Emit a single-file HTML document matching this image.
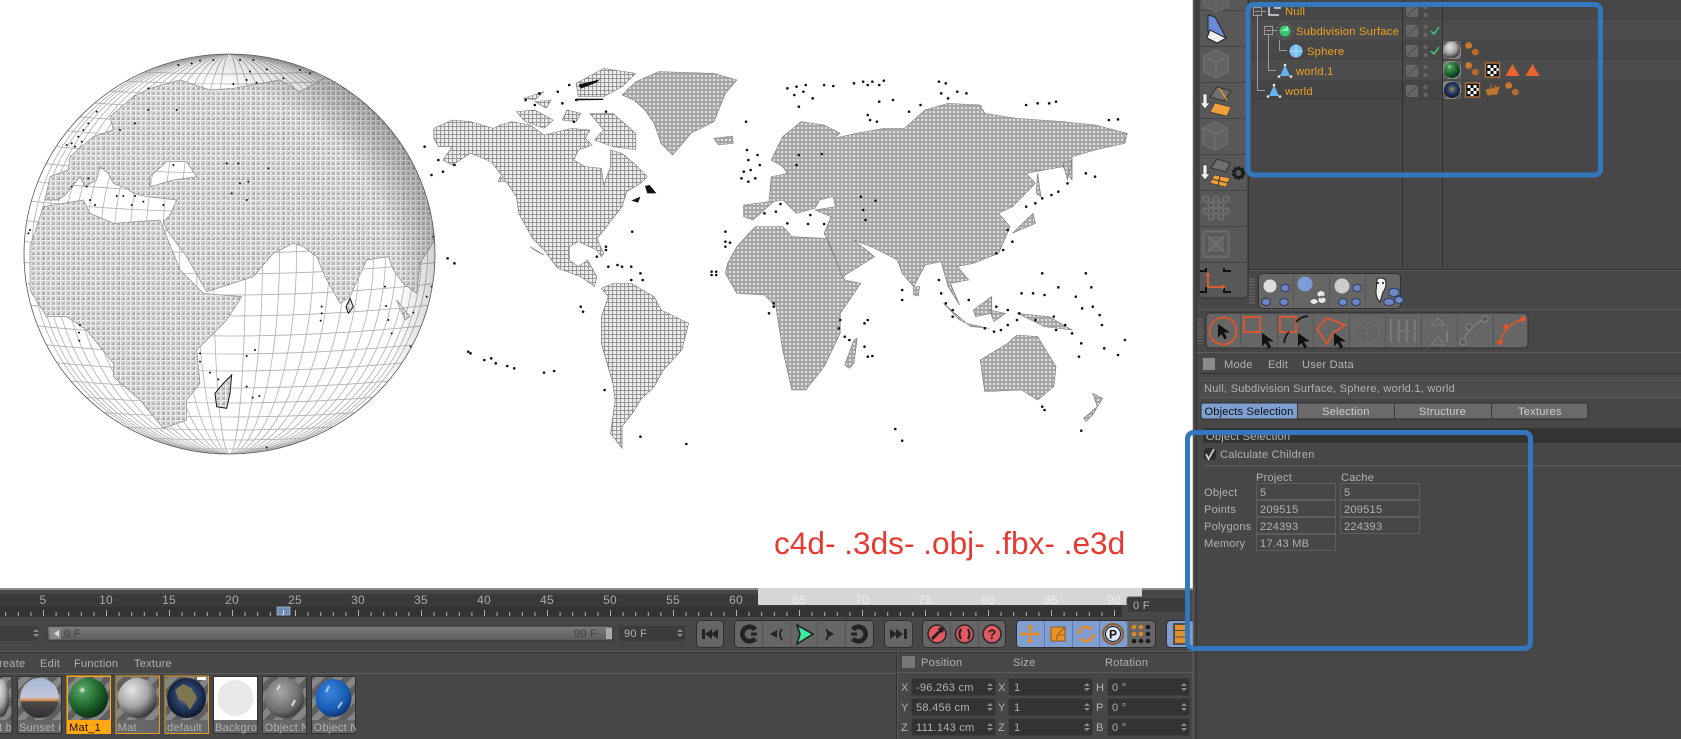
<!DOCTYPE html>
<html><head><meta charset="utf-8"><title>Cinema 4D world map</title>
<style>
html,body{margin:0;padding:0;background:#474747;overflow:hidden}
svg{display:block}
text{font-family:"Liberation Sans",sans-serif;font-size:11.1px;fill:#b2b2b2;letter-spacing:.22px}
.o{fill:#f0a51e;font-size:11.2px}
.g{fill:#666;stroke:#2f2f2f;stroke-width:1}
.d{fill:#242424}
.sep{stroke:#555;stroke-width:1}
.f{fill:#474747;stroke:#5e5e5e}
.c{fill:#333;stroke:#3e3e3e}
.tn{font-size:12px;fill:#a9a9a9;text-anchor:middle}
.ti{font-size:12px;fill:#eee;text-anchor:middle}
</style></head><body>
<svg xmlns="http://www.w3.org/2000/svg" width="1681" height="739" viewBox="0 0 1681 739">
<defs>
<pattern id="ha" patternUnits="userSpaceOnUse" width="4" height="4" patternTransform="scale(2.178,3)"><rect width="4" height="4" fill="#eee"/><path d="M0 .5H4M.5 0V4" stroke="#969696" stroke-width="1"/></pattern>
<pattern id="hb" patternUnits="userSpaceOnUse" width="4" height="4" patternTransform="scale(2.178,3)"><rect width="4" height="4" fill="#a6a6a6"/><rect x="1" y="1" width="2" height="2" fill="#e4e4e4"/></pattern>
<pattern id="hg" patternUnits="userSpaceOnUse" width="15" height="15" patternTransform="scale(3)"><rect width="15" height="15" fill="#a9a9a9"/><path d="M0 .5H15M0 5.5H15M0 10.5H15M.5 0V15M5.5 0V15M10.5 0V15" stroke="#eee" stroke-width="1.6"/><path d="M0 5L5 0M5 5L10 0M10 5L15 0M0 10L5 5M5 10L10 5M10 10L15 5M0 15L5 10M5 15L10 10M10 15L15 10" stroke="#e6e6e6" stroke-width="1"/></pattern>
<pattern id="st" patternUnits="userSpaceOnUse" width="13" height="13" patternTransform="rotate(45)"><rect width="13" height="13" fill="#5f5f5f"/><rect width="6.5" height="13" fill="#868686"/></pattern>
<pattern id="tk" patternUnits="userSpaceOnUse" x="-20" y="608" width="63" height="8"><path d="M.5 2V8M13.1 4V8M25.7 4V8M38.3 4V8M50.9 4V8" stroke="#b4b4b4" stroke-width="1"/></pattern>
<clipPath id="gc"><ellipse cx="229.5" cy="254" rx="205.5" ry="200"/></clipPath>
<radialGradient id="lb" cx=".38" cy=".6" r=".72"><stop offset=".74" stop-color="#000" stop-opacity="0"/><stop offset=".9" stop-color="#000" stop-opacity=".22"/><stop offset="1" stop-color="#000" stop-opacity=".8"/></radialGradient>
<linearGradient id="sl" x1="0" y1="0" x2="0" y2="1"><stop offset="0" stop-color="#7c7c7c"/><stop offset="1" stop-color="#595959"/></linearGradient>
<radialGradient id="mgr" cx=".36" cy=".3" r=".75"><stop offset="0" stop-color="#e4e4e4"/><stop offset=".55" stop-color="#a5a5a5"/><stop offset="1" stop-color="#2c2c2c"/></radialGradient>
<radialGradient id="mgn" cx=".34" cy=".3" r=".75"><stop offset="0" stop-color="#eaf5ea"/><stop offset=".12" stop-color="#4f9c5f"/><stop offset=".55" stop-color="#1f6a30"/><stop offset="1" stop-color="#0b2a12"/></radialGradient>
<radialGradient id="mea" cx=".5" cy=".45" r=".6"><stop offset="0" stop-color="#a08c55"/><stop offset=".45" stop-color="#28406a"/><stop offset="1" stop-color="#0a0f20"/></radialGradient>
<radialGradient id="mbl" cx=".4" cy=".35" r=".7"><stop offset="0" stop-color="#3b86e0"/><stop offset=".7" stop-color="#1559b0"/><stop offset="1" stop-color="#0b2c5e"/></radialGradient>
<radialGradient id="mob" cx=".4" cy=".35" r=".7"><stop offset="0" stop-color="#a8a8a8"/><stop offset=".7" stop-color="#6b6b6b"/><stop offset="1" stop-color="#333"/></radialGradient>
<linearGradient id="msu" x1="0" y1="0" x2="0" y2="1"><stop offset="0" stop-color="#a5b6d6"/><stop offset=".48" stop-color="#c2c6d6"/><stop offset=".56" stop-color="#d98a4a"/><stop offset=".6" stop-color="#4e4a48"/><stop offset="1" stop-color="#2e2e2e"/></linearGradient>
<g id="cube"><path d="M0-14L12-8V8L0 14L-12 8V-8Z" fill="#626262" stroke="#6f6f6f" stroke-width="1.4"/><path d="M-12-8L0-2L12-8M0-2V14" fill="none" stroke="#6f6f6f" stroke-width="1.4"/></g>
<g id="lay"><rect x="-6" y="-6" width="12" height="12" fill="#676767"/><path d="M-6 6L6-6" stroke="#494949"/><circle cx="13.5" cy="-4" r="2.2" fill="#666"/><circle cx="13.5" cy="4" r="2.2" fill="#666"/></g>
<g id="pd"><circle cx="0" cy="0" r="3.4" fill="#c9772a"/><circle cx="6.6" cy="6.6" r="3.4" fill="#b9692a"/></g>
<g id="ck"><rect x="0" y="0" width="14" height="14" fill="#111" stroke="#b5713a" stroke-width="1.4"/><path d="M2 2h3v3H2zM8 2h3v3H8zM5 5h3v3H5zM11 5h2v3h-2zM2 8h3v3H2zM8 8h3v3H8zM5 11h3v2H5z" fill="#fff"/></g>
<g id="tri"><path d="M0-7L5 4H-5Z" fill="#63b3ee"/><circle cx="0" cy="-7" r="1.3" fill="#eee"/><circle cx="-6" cy="4.500" r="1.3" fill="#eee"/><circle cx="6" cy="4.500" r="1.3" fill="#eee"/></g>
<g id="arw"><path d="M0 0L0 13.500L3.500 10L6.500 15.500L9 14L6 8.500L12 8.500Z" fill="#111"/></g>
<g id="sp"><path d="M-3-1L0-4L3-1ZM-3 1L0 4L3 1Z" fill="#8e8e8e"/></g>
</defs>

<rect width="1681" height="739" fill="#474747"/>
<rect width="1193" height="588" fill="#fff"/>

<!-- GLOBE -->
<g clip-path="url(#gc)">
<rect x="20" y="50" width="420" height="410" fill="#fff"/>
<g fill="none" stroke="#b0b0b0" stroke-width=".8">
<ellipse cx="229.5" cy="254" rx="16" ry="200"/><ellipse cx="229.5" cy="254" rx="33" ry="200"/><ellipse cx="229.5" cy="254" rx="50" ry="200"/><ellipse cx="229.5" cy="254" rx="67" ry="200"/><ellipse cx="229.5" cy="254" rx="84" ry="200"/><ellipse cx="229.5" cy="254" rx="100" ry="200"/><ellipse cx="229.5" cy="254" rx="116" ry="200"/><ellipse cx="229.5" cy="254" rx="130" ry="200"/><ellipse cx="229.5" cy="254" rx="144" ry="200"/><ellipse cx="229.5" cy="254" rx="156" ry="200"/><ellipse cx="229.5" cy="254" rx="167" ry="200"/><ellipse cx="229.5" cy="254" rx="177" ry="200"/><ellipse cx="229.5" cy="254" rx="185" ry="200"/><ellipse cx="229.5" cy="254" rx="192" ry="200"/><ellipse cx="229.5" cy="254" rx="198" ry="200"/>
<path d="M20 241Q229 265 440 241M20 262Q229 286 440 262M20 283Q229 307 440 283M20 304Q229 328 440 304M20 324Q229 348 440 324M20 342Q229 366 440 342M20 359Q229 383 440 359M20 376Q229 400 440 376M20 391Q229 415 440 391M20 405Q229 429 440 405M20 418Q229 442 440 418M20 428Q229 452 440 428M20 437Q229 461 440 437M20 444Q229 468 440 444M20 220Q229 244 440 220M20 200Q229 224 440 200M20 180Q229 204 440 180M20 161Q229 185 440 161M20 143Q229 167 440 143M20 126Q229 150 440 126M20 111Q229 135 440 111M20 96Q229 120 440 96M20 83Q229 107 440 83M20 72Q229 96 440 72M20 62Q229 86 440 62"/>
</g>
<g transform="translate(0,30) scale(.33333)">
<path fill="url(#hg)" stroke="#8a8a8a" stroke-width="2" fill-rule="evenodd" d="M135 510L150 440L205 420L210 380L280 320L340 300L330 260L400 200L450 175L540 150L630 180L700 175L840 150L900 185L1000 130L1100 170L1200 280L1290 470L1310 620L1260 700L1250 790L1210 760L1180 720L1165 680L1100 690L1050 800L1020 820L975 740L950 680L910 650L880 640L820 670L760 740L620 785L560 680L530 640L500 600L490 575L510 555L530 510L440 500L400 490L380 475L340 460L325 430L300 410L290 450L255 470L240 440L200 490L175 510ZM450 440L500 395L560 395L590 440L520 450L450 470Z"/>
<path fill="url(#hg)" stroke="#8a8a8a" stroke-width="2" d="M90 650L130 530L250 510L270 550L340 580L480 570L540 720L610 790L725 800L680 870L590 960L600 1060L560 1110L560 1170L490 1195L420 1110L340 1040L340 1000L260 900L200 860L140 860L90 780Z"/>
<path fill="url(#hg)" stroke="#111" stroke-width="3" d="M645 1090L670 1060L695 1035L690 1090L680 1135L650 1130Z"/>
<path fill="url(#hg)" stroke="#111" stroke-width="3" d="M1038 830L1050 805L1060 830L1045 850Z"/>
<path fill="url(#hg)" stroke="#888" stroke-width="2" d="M1190 810L1230 860L1215 870Z"/>
<path fill="none" stroke="#111" stroke-width="6" stroke-linecap="round" d="M215 340h.1M235 320h.1M250 300h.1M265 280h.1M225 350h.1M245 335h.1M200 345h.1M290 245h.1M445 175h.1M535 105h.1M575 100h.1M600 92h.1M640 90h.1M720 90h.1M760 90h.1M750 125h.1M770 158h.1M700 162h.1M740 150h.1M800 118h.1M850 145h.1M900 120h.1M930 130h.1M445 240h.1M405 280h.1M530 240h.1M360 300h.1M350 498h.1M265 445h.1M260 470h.1M215 470h.1M270 510h.1M285 525h.1M395 525h.1M405 498h.1M430 515h.1M490 525h.1M370 498h.1M520 405h.1M680 400h.1M715 400h.1M720 460h.1M745 455h.1M740 510h.1M695 490h.1M805 415h.1M1155 770h.1M1158 828h.1M1165 870h.1M1175 910h.1M965 830h.1M965 850h.1M962 872h.1M1240 848h.1M1232 950h.1M1280 800h.1M1295 770h.1M1300 620h.1M240 885h.1M237 908h.1M238 932h.1M600 970h.1M600 995h.1M630 1028h.1M655 1048h.1M740 978h.1M765 960h.1M740 1070h.1M758 1103h.1M778 1098h.1M800 1252h.1M85 610h.1M90 600h.1M72 730h.1M72 745h.1"/>
</g>
<ellipse cx="229.5" cy="254" rx="205.5" ry="200" fill="url(#lb)"/>
</g>
<ellipse cx="229.5" cy="254" rx="205.5" ry="200" fill="none" stroke="#555" stroke-width=".8"/>

<!-- WORLD MAP -->
<g transform="translate(420,50) scale(.4592,.33333)">
<g stroke="#777" stroke-width="1.5">
<path fill="url(#ha)" d="M30 235L70 210L110 215L160 235L175 225L200 215L240 225L270 255L330 235L370 240L360 265L375 285L345 300L335 330L360 350L395 355L400 405L415 350L415 300L440 310L470 345L495 380L480 400L450 425L440 470L420 505L395 550L385 565L400 610L395 620L385 600L345 575L325 590L325 630L345 650L365 630L385 680L380 710L350 680L300 655L270 600L245 565L215 490L210 440L180 380L155 335L110 310L70 345L50 330L70 290L40 290L30 265Z"/>
<path fill="url(#ha)" d="M340 100L400 55L470 70L440 110L400 140L345 140Z"/>
<path fill="url(#ha)" d="M210 185L250 180L290 210L270 235L230 215ZM370 190L420 190L470 250L470 300L420 290L380 270L400 240ZM320 180L350 190L340 215L310 210ZM250 155L285 150L275 175ZM225 145L270 125L250 150Z"/>
<path fill="url(#hb)" d="M440 135L470 95L520 65L640 70L690 90L665 130L640 215L590 250L550 315L525 280L510 220L490 180L465 150Z"/>
<path fill="url(#ha)" d="M395 715L420 700L460 700L510 740L525 780L585 820L570 900L530 960L510 1010L480 1050L465 1085L440 1130L440 1195L415 1150L425 1050L420 1000L395 880L395 800L410 740Z"/>
<path fill="url(#hb)" d="M670 640L690 590L730 530L790 530L810 560L885 565L925 690L960 700L915 790L915 850L880 950L840 1020L810 1020L790 900L775 770L750 735L690 730L665 670Z"/>
<path fill="url(#hb)" d="M705 465L760 455L765 380L800 370L790 350L765 330L790 260L830 215L880 225L915 250L900 265L950 250L1010 235L1055 235L1100 180L1150 160L1220 165L1230 190L1300 205L1400 215L1470 225L1540 250L1535 280L1470 300L1420 320L1420 390L1400 350L1320 370L1340 400L1290 470L1260 490L1285 530L1260 610L1205 640L1170 650L1195 690L1155 700L1175 765L1150 710L1135 635L1100 645L1075 710L1050 670L1040 630L990 595L945 570L990 620L920 680L890 575L880 550L895 500L860 480L905 470L900 440L870 450L860 475L820 490L790 450L770 455L725 510L705 500Z"/>
<path fill="url(#hb)" d="M1220 930L1280 880L1300 855L1345 860L1385 950L1380 1010L1345 1050L1310 1020L1230 1025Z"/>
<path fill="url(#hb)" d="M925 945L945 870L952 865L945 940L935 955ZM1205 780L1245 740L1245 790L1210 800ZM1300 790L1370 800L1420 840L1360 830ZM1140 760L1190 820L1175 810ZM1290 550L1335 490L1340 520ZM640 265L680 258L682 280L650 285ZM1400 340L1420 330L1410 390ZM1345 370L1352 440L1342 430ZM1075 710L1088 710L1085 738L1075 735ZM1240 780L1275 790L1250 815ZM1190 820L1240 835L1200 830ZM1445 1105L1475 1070L1465 1095L1450 1115ZM1465 1030L1487 1045L1475 1070Z"/>
<path fill="url(#ha)" d="M240 590L270 615L255 605ZM175 380L185 395L170 395Z"/>
</g>
<path fill="#111" d="M490 408L500 405L515 430L495 430ZM345 104L392 88L384 98L350 116ZM340 146L400 146L398 150L342 151ZM460 452L480 440L475 458Z"/>
<path fill="none" stroke="#111" stroke-width="2.6" stroke-linecap="round" vector-effect="non-scaling-stroke" d="M325 105h.1M300 125h.1M230 150h.1M260 130h.1M250 165h.1M310 160h.1M340 150h.1M405 185h.1M335 215h.1M10 290h.1M40 330h.1M25 375h.1M50 365h.1M75 345h.1M60 625h.1M75 640h.1M410 650h.1M385 620h.1M405 600h.1M405 590h.1M430 645h.1M440 650h.1M460 650h.1M480 670h.1M485 690h.1M460 690h.1M350 770h.1M355 785h.1M105 905h.1M110 910h.1M140 930h.1M155 925h.1M165 940h.1M190 948h.1M205 955h.1M270 968h.1M292 963h.1M402 1020h.1M480 1160h.1M580 1182h.1M665 545h.1M665 575h.1M675 578h.1M665 590h.1M635 665h.1M645 665h.1M635 675h.1M645 675h.1M770 770h.1M770 760h.1M760 790h.1M915 810h.1M912 835h.1M925 860h.1M935 870h.1M975 810h.1M968 820h.1M968 890h.1M975 920h.1M985 918h.1M710 215h.1M712 300h.1M715 330h.1M735 315h.1M705 365h.1M720 360h.1M740 345h.1M730 385h.1M700 385h.1M715 395h.1M800 115h.1M820 110h.1M840 105h.1M815 135h.1M835 125h.1M855 145h.1M880 105h.1M900 108h.1M825 170h.1M945 100h.1M965 95h.1M985 95h.1M1010 92h.1M975 105h.1M1000 105h.1M1130 95h.1M1145 100h.1M1170 125h.1M1190 130h.1M1135 130h.1M1150 145h.1M1320 165h.1M1345 160h.1M1370 160h.1M1385 155h.1M1500 210h.1M1520 208h.1M1000 155h.1M1030 150h.1M975 195h.1M980 210h.1M995 215h.1M1065 185h.1M1090 165h.1M1450 370h.1M1470 380h.1M1340 460h.1M1320 470h.1M1355 445h.1M1375 435h.1M1390 425h.1M1410 400h.1M1255 610h.1M1270 600h.1M1290 575h.1M1280 540h.1M1145 760h.1M1160 780h.1M1160 800h.1M1230 835h.1M1250 845h.1M1265 840h.1M1280 825h.1M1305 790h.1M1300 810h.1M1255 770h.1M1280 780h.1M1340 810h.1M1380 800h.1M1385 840h.1M1420 850h.1M1310 730h.1M1335 730h.1M1360 735h.1M1390 712h.1M1355 670h.1M1450 670h.1M1462 712h.1M1428 740h.1M1442 775h.1M1465 770h.1M1480 795h.1M1485 825h.1M1440 880h.1M1490 895h.1M1520 915h.1M1535 870h.1M1435 920h.1M1405 825h.1M1050 720h.1M1050 750h.1M1130 690h.1M1135 730h.1M1195 750h.1M1355 1070h.1M1360 1080h.1M1035 1137h.1M1050 1172h.1M1440 1142h.1M462 545h.1M960 440h.1M965 480h.1M970 510h.1M992 452h.1M875 312h.1M825 315h.1M820 345h.1M850 495h.1M845 522h.1M800 520h.1M880 522h.1M775 485h.1M750 490h.1M785 462h.1"/>
</g>

<text x="774" y="554" style="font-size:31.6px;fill:#e53a31;letter-spacing:0">c4d- .3ds- .obj- .fbx- .e3d</text>

<!-- TIMELINE -->
<rect x="0" y="588" width="1193" height="2" fill="#8c8c8c"/>
<rect x="0" y="594" width="1122" height="13" fill="#3a3a3a"/>
<rect x="0" y="607" width="1122" height="10" rx="1" fill="#333"/>
<rect x="0" y="608" width="1115" height="8" fill="url(#tk)"/>
<rect x="277" y="607" width="13" height="8" fill="#6f8db5" stroke="#9db7d8" stroke-width=".8"/>
<path d="M283.5 610V615" stroke="#ddd"/>
<rect x="758" y="588" width="384" height="17" rx="1" fill="#d6d6d6"/>
<g>
<text class="tn" x="43" y="604">5</text><text class="tn" x="106" y="604">10</text><text class="tn" x="169" y="604">15</text><text class="tn" x="232" y="604">20</text><text class="tn" x="295" y="604">25</text><text class="tn" x="358" y="604">30</text><text class="tn" x="421" y="604">35</text><text class="tn" x="484" y="604">40</text><text class="tn" x="547" y="604">45</text><text class="tn" x="610" y="604">50</text><text class="tn" x="673" y="604">55</text><text class="tn" x="736" y="604">60</text>
<text class="ti" x="799" y="604">65</text><text class="ti" x="862" y="604">70</text><text class="ti" x="925" y="604">75</text><text class="ti" x="988" y="604">80</text><text class="ti" x="1051" y="604">85</text><text class="ti" x="1114" y="604">90</text>
</g>
<rect x="1127" y="597" width="64" height="16" rx="2" fill="#3b3b3b" stroke="#535353"/>
<text x="1133" y="609">0 F</text>

<!-- slider row -->
<rect x="-2" y="626" width="40" height="15" rx="2" fill="#3d3d3d"/>
<use href="#sp" x="36" y="633"/>
<rect x="47" y="626" width="566" height="15" rx="3" fill="url(#sl)" stroke="#303030"/>
<rect x="50" y="628" width="11" height="11" fill="#888"/><path d="M59 630L54 633.5L59 637Z" fill="#ddd"/>
<text x="64" y="637" style="fill:#3f3f3f">0 F</text>
<text x="574" y="637" style="fill:#3f3f3f">90 F</text>
<rect x="606" y="628" width="6" height="11" fill="#aaa"/>
<rect x="619" y="626" width="66" height="15" rx="2" fill="#3b3b3b"/>
<text x="624" y="637">90 F</text>
<use href="#sp" x="680" y="633"/>

<!-- transport -->
<rect class="g" x="696.5" y="620.5" width="27" height="27" rx="4"/>
<path class="d" d="M702 629h3v10h-3zM705 634l7-5v10zM711 634l7-5v10z"/>
<rect class="g" x="734.5" y="620.5" width="139" height="27" rx="4"/>
<path class="sep" d="M762.5 621V647M790.5 621V647M817.5 621V647M845.5 621V647"/>
<path d="M755.2 629.5A7.2 7.2 0 1 0 755.2 638.5" fill="none" stroke="#222" stroke-width="4.6"/><path class="d" d="M751 632.500h6v3h-6z"/>
<path class="d" d="M770 634l7-4v8z"/><path d="M782 629Q778 634 782 640" fill="none" stroke="#222" stroke-width="1.8"/>
<path d="M797 625L813 634L797 644L800 634Z" fill="#3fe898" stroke="#222" stroke-width="1.6"/>
<path class="d" d="M841 630l-7 4 7 4z" transform="matrix(-1 0 0 1 1668 0)"/><path d="M826 629Q830 634 826 640" fill="none" stroke="#222" stroke-width="1.8"/>
<path d="M852.8 629.5A7.2 7.2 0 1 1 852.8 638.5" fill="none" stroke="#222" stroke-width="4.6"/><path class="d" d="M851 632.500h6v3h-6z"/>
<rect class="g" x="884.5" y="620.5" width="28" height="27" rx="4"/>
<path class="d" d="M890 629l7 5-7 5zM896 629l7 5-7 5zM904 629h3v10h-3z"/>
<rect class="g" x="922.5" y="620.5" width="83" height="27" rx="4"/>
<path class="sep" d="M950.5 621V647M978.5 621V647"/>
<circle cx="937" cy="634" r="9" fill="#e25a60" stroke="#2a2a2a" stroke-width="1.6"/><path d="M932 639L939 632" stroke="#222" stroke-width="3"/><circle cx="941" cy="630" r="2.8" fill="#222"/>
<circle cx="964.5" cy="634" r="9" fill="#e25a60" stroke="#2a2a2a" stroke-width="1.6"/><path d="M961 629Q958 634 961 639M968 629Q971 634 968 639" fill="none" stroke="#222" stroke-width="2.2"/>
<circle cx="992" cy="634" r="9" fill="#e25a60" stroke="#2a2a2a" stroke-width="1.6"/><text x="992" y="639" text-anchor="middle" style="font-size:14px;font-weight:bold;fill:#222;letter-spacing:0">?</text>
<rect class="g" x="1016.5" y="620.5" width="139" height="27" rx="4"/>
<rect x="1017" y="621" width="110" height="26" rx="3" fill="#809fd0"/>
<path d="M1044.5 621V647M1072.5 621V647M1099.5 621V647M1127.5 621V647" stroke="#5e7aa5"/>
<path d="M1030 626V642M1022 634H1038" stroke="#e88a25" stroke-width="2.2"/><path d="M1030 624l3 4h-6zM1030 644l3-4h-6zM1020 634l4-3v6zM1040 634l-4-3v6z" fill="#e88a25"/>
<rect x="1051" y="627" width="14" height="14" fill="#ea9226" stroke="#8a5b20"/><path d="M1057 635V641M1057 635H1065M1058 634L1065 627" stroke="#8a5b20"/>
<circle cx="1086" cy="634" r="7" fill="none" stroke="#e88a25" stroke-width="2.6" stroke-dasharray="17 5"/>
<circle cx="1113" cy="634" r="10" fill="none" stroke="#8e5a22" stroke-width="2"/><circle cx="1113" cy="634" r="7.5" fill="#dfe6f2" stroke="#111"/><text x="1113" y="638.5" text-anchor="middle" style="font-size:12px;font-weight:bold;fill:#111;letter-spacing:0">P</text>
<g fill="#d98a2c"><circle cx="1134" cy="627" r="2.3"/><circle cx="1141" cy="627" r="2.3"/><circle cx="1134" cy="634" r="2.3"/><circle cx="1141" cy="634" r="2.3"/></g>
<g fill="#1b1b1b"><circle cx="1148" cy="627" r="2.3"/><circle cx="1148" cy="634" r="2.3"/><circle cx="1134" cy="641" r="2.3"/><circle cx="1141" cy="641" r="2.3"/><circle cx="1148" cy="641" r="2.3"/></g>
<rect x="1166.5" y="620.5" width="28" height="27" rx="4" fill="#809fd0" stroke="#2f2f2f"/>
<rect x="1174" y="624" width="14" height="20" fill="#e0912e" stroke="#4d4d4d" stroke-width="2"/><path d="M1174 630.5H1188M1174 637H1188" stroke="#4d4d4d"/>

<!-- material area -->
<path d="M0 651.5H1193M0 673.5H897" stroke="#5c5c5c"/>
<path d="M0 652.5H1193" stroke="#333"/>
<text x="-1" y="667">reate</text><text x="40" y="667">Edit</text><text x="74" y="667">Function</text><text x="134" y="667">Texture</text>
<g stroke="#2f2f2f"><rect x="-3" y="676.5" width="15" height="57" fill="#676767"/><rect x="17.5" y="676.5" width="44" height="57" fill="#676767"/><rect x="67" y="676" width="43.5" height="57.5" fill="#ffa812" stroke="#ffa812"/><rect x="116" y="676" width="43.5" height="57.5" fill="#676767" stroke="#e29d23"/><rect x="165" y="676" width="43.5" height="57.5" fill="#676767" stroke="#e29d23"/><rect x="213.5" y="676.5" width="44" height="57" fill="#676767"/><rect x="262.5" y="676.5" width="44" height="57" fill="#676767"/><rect x="311.5" y="676.5" width="44" height="57" fill="#676767"/></g>
<rect x="-3" y="677" width="15" height="43" fill="url(#st)"/><rect x="18" y="677" width="43" height="43" fill="url(#st)"/><rect x="68" y="677" width="42" height="43" fill="url(#st)"/><rect x="117" y="677" width="42" height="43" fill="url(#st)"/><rect x="166" y="677" width="42" height="43" fill="url(#st)"/><rect x="214" y="677" width="43" height="43" fill="#fff"/><rect x="263" y="677" width="43" height="43" fill="url(#st)"/><rect x="312" y="677" width="43" height="43" fill="url(#st)"/>
<ellipse cx="1" cy="698" rx="8" ry="19" fill="url(#mgr)"/>
<ellipse cx="39.5" cy="698" rx="19.5" ry="20" fill="url(#msu)"/>
<ellipse cx="88.5" cy="698" rx="19.5" ry="20" fill="url(#mgn)"/>
<ellipse cx="137.5" cy="698" rx="19.5" ry="20" fill="url(#mgr)"/>
<ellipse cx="186.5" cy="698" rx="19.5" ry="20" fill="url(#mea)"/><path d="M175 690l8-6 8 4 6 10-7 12-5-8-6-2z" fill="#7d7650"/><rect x="197" y="677" width="9" height="3" fill="#fff"/>
<ellipse cx="235.5" cy="698" rx="18" ry="18" fill="#e9e9e9"/>
<ellipse cx="284.5" cy="698" rx="19.5" ry="20" fill="url(#mob)"/><path d="M277 690l3-5M292 706l3-6" stroke="#ddd" stroke-width="2"/>
<ellipse cx="333.5" cy="698" rx="18" ry="19" fill="url(#mbl)"/><path d="M326 692l3-6M338 708l4-6" stroke="#a9c9ee" stroke-width="2"/>
<text x="-1" y="731">t b</text><text x="19" y="731">Sunset I</text><text x="69" y="731" style="fill:#201000">Mat_1</text><text x="117.5" y="731">Mat</text><text x="167" y="731">default</text><text x="215" y="731">Backgro</text><text x="264.5" y="731">Object N</text><text x="313.5" y="731">Object N</text>
<rect x="356" y="676" width="6" height="58" fill="#474747"/><rect x="12.5" y="676" width="4" height="58" fill="#474747"/>
<rect x="306.7" y="676" width="4" height="58" fill="#474747"/><rect x="257.8" y="676" width="4.4" height="58" fill="#474747"/>
<path d="M12 676.5V733.5M61.5 676.5V733.5M306.5 676.5V733.5M257.5 676.5V733.5" stroke="#2f2f2f"/>

<!-- coordinates -->
<path d="M896.5 652V739" stroke="#2f2f2f"/><path d="M897.5 652V739" stroke="#5a5a5a"/>
<rect x="902" y="656" width="13" height="12" fill="#777"/>
<text x="921" y="666">Position</text><text x="1013" y="666">Size</text><text x="1105" y="666">Rotation</text>
<path d="M898 672.5H1193" stroke="#5c5c5c"/>
<rect class="c" x="911.5" y="678.5" width="84" height="17" rx="2"/><rect class="c" x="1008.5" y="678.5" width="84" height="17" rx="2"/><rect class="c" x="1107.5" y="678.5" width="82" height="17" rx="2"/><rect class="c" x="911.5" y="698.5" width="84" height="17" rx="2"/><rect class="c" x="1008.5" y="698.5" width="84" height="17" rx="2"/><rect class="c" x="1107.5" y="698.5" width="82" height="17" rx="2"/><rect class="c" x="911.5" y="718.5" width="84" height="17" rx="2"/><rect class="c" x="1008.5" y="718.5" width="84" height="17" rx="2"/><rect class="c" x="1107.5" y="718.5" width="82" height="17" rx="2"/>
<text x="901" y="691">X</text><text x="998" y="691">X</text><text x="1096" y="691">H</text><text x="901" y="711">Y</text><text x="998" y="711">Y</text><text x="1096" y="711">P</text><text x="901" y="731">Z</text><text x="998" y="731">Z</text><text x="1096" y="731">B</text>
<text x="916" y="691">-96.263 cm</text><text x="1014" y="691">1</text><text x="1112" y="691">0 °</text>
<text x="916" y="711">58.456 cm</text><text x="1014" y="711">1</text><text x="1112" y="711">0 °</text>
<text x="916" y="731">111.143 cm</text><text x="1014" y="731">1</text><text x="1112" y="731">0 °</text>
<use href="#sp" x="990" y="687"/><use href="#sp" x="1087" y="687"/><use href="#sp" x="1184" y="687"/><use href="#sp" x="990" y="707"/><use href="#sp" x="1087" y="707"/><use href="#sp" x="1184" y="707"/><use href="#sp" x="990" y="727"/><use href="#sp" x="1087" y="727"/><use href="#sp" x="1184" y="727"/>

<!-- RIGHT PANEL -->
<rect x="1193" y="0" width="488" height="739" fill="#474747"/>
<path d="M1196.5 0V739" stroke="#333"/><path d="M1193 0V739" stroke="#777" stroke-width=".6"/>
<!-- left toolbar -->
<rect x="1199" y="-10" width="49" height="308" rx="4" fill="#585858" stroke="#2f2f2f"/>
<path d="M1199 10.5H1247M1199 46.5H1247M1199 82.5H1247M1199 118.5H1247M1199 154.5H1247M1199 190.5H1247M1199 226.5H1247M1199 262.5H1247" stroke="#454545"/>
<path d="M1248.5 0V270" stroke="#333"/>
<use href="#cube" x="1216" y="-2" opacity=".8"/>
<path d="M1208 15L1215 17L1222 30L1226 38L1208 32Z" fill="#6a8ad8" stroke="#222"/><path d="M1210 30L1226 38L1217 43L1207 38Z" fill="#eee" stroke="#222"/>
<use href="#cube" x="1216" y="64"/>
<path d="M1203 94h4v9h3l-5 6-5-6h3z" fill="#eee" stroke="#333" stroke-width=".6"/><path d="M1217 87L1231 91L1224 101L1210 97Z" fill="#6f6f6f" stroke="#333"/><path d="M1219 88L1227 100" stroke="#e8902a" stroke-width="1.4"/><path d="M1215 103L1231 107L1227 116L1210 112Z" fill="#f0a03a" stroke="#333" stroke-width=".6"/>
<use href="#cube" x="1215" y="136"/>
<path d="M1203 165h4v9h3l-5 6-5-6h3z" fill="#eee" stroke="#333" stroke-width=".6"/><path d="M1217 159L1230 163L1226 172L1211 168Z" fill="#6f6f6f" stroke="#333"/><path d="M1214 175L1230 178L1226 187L1210 183Z" fill="#f0a03a" stroke="#333" stroke-width=".6"/><path d="M1212 179L1228 183M1220 176L1218 186" stroke="#333"/>
<circle cx="1238.5" cy="173" r="4.5" fill="none" stroke="#1c1c1c" stroke-width="3"/><circle cx="1238.5" cy="173" r="6" fill="none" stroke="#1c1c1c" stroke-width="1.6" stroke-dasharray="2 2"/>
<g fill="none" stroke="#707070" stroke-width="1.8"><circle cx="1206" cy="199" r="2.8"/><circle cx="1216" cy="199" r="2.8"/><circle cx="1226" cy="199" r="2.8"/><circle cx="1211" cy="205" r="2.8"/><circle cx="1221" cy="205" r="2.8"/><circle cx="1206" cy="211" r="2.8"/><circle cx="1216" cy="211" r="2.8"/><circle cx="1226" cy="211" r="2.8"/><circle cx="1211" cy="217" r="2.8"/><circle cx="1221" cy="217" r="2.8"/></g>
<rect x="1203" y="231" width="26" height="26" rx="2" fill="#5f5f5f" stroke="#6f6f6f" stroke-width="1.5"/><rect x="1207" y="235" width="18" height="18" fill="#636363" stroke="#4a4a4a"/><path d="M1207 235L1225 253M1225 235L1207 253" stroke="#747474" stroke-width="1.5"/>
<path d="M1200 271H1206V268M1224 268V271H1231M1200 292H1206V287M1224 287V292H1231" fill="none" stroke="#111" stroke-width="2"/>
<path d="M1208 274V287H1224" fill="none" stroke="#e85c2e" stroke-width="1.8"/><path d="M1208 272l2.5 4h-5zM1226 287l-4-2.5v5z" fill="#e85c2e"/>

<!-- object manager rows -->
<rect x="1249" y="20" width="432" height="20" fill="#4c4c4c"/>
<rect x="1249" y="60" width="432" height="20" fill="#4c4c4c"/>
<rect x="1249" y="80" width="193" height="20" fill="#444"/>
<path d="M1402.5 0V268M1442.5 0V268" stroke="#2e2e2e"/>
<path d="M1249 270.5H1681" stroke="#5a5a5a"/><path d="M1249 269.5H1681" stroke="#333"/>
<!-- tree -->
<g fill="none" stroke="#9c9c9c" stroke-width="1">
<path d="M1257.5 14V90.5H1265"/>
<path d="M1268.5 35V70.5H1276M1279.500 40V50.5H1287"/>
<rect x="1253.5" y="7.5" width="8" height="8"/><path d="M1255 11.5H1260M1261 11.5H1266"/>
<rect x="1264.5" y="26.5" width="8" height="8"/><path d="M1266 30.5H1271M1272 30.5H1277"/>
</g>
<path d="M1269 5V15H1279M1275 3V8H1280V3" fill="none" stroke="#d9e1ef" stroke-width="1.5"/>
<circle cx="1285" cy="31" r="5.5" fill="#39c46f"/><path d="M1281 31h7v-5" fill="#7ef0a8"/><circle cx="1285" cy="31" r="8" fill="none" stroke="#777" stroke-dasharray="1.5 2"/>
<circle cx="1296" cy="51" r="6.5" fill="#79c0f0"/><path d="M1289.5 51H1302.5M1296 44.5V57.5" stroke="#bfe3fa" stroke-width=".8"/>
<use href="#tri" x="1285" y="72"/><use href="#tri" x="1274" y="92"/>
<text class="o" x="1285" y="15">Null</text><text class="o" x="1296" y="35">Subdivision Surface</text><text class="o" x="1307" y="55">Sphere</text><text class="o" x="1296" y="75">world.1</text><text class="o" x="1285" y="95">world</text>
<use href="#lay" x="1412" y="11"/><use href="#lay" x="1412" y="31"/><use href="#lay" x="1412" y="51"/><use href="#lay" x="1412" y="71"/><use href="#lay" x="1412" y="91"/>
<path d="M1431 31L1434 34L1439 27M1431 51L1434 54L1439 47" fill="none" stroke="#3fcf82" stroke-width="1.4"/>
<rect x="1443" y="41" width="18" height="18" fill="url(#st)"/><circle cx="1452" cy="50" r="8" fill="url(#mgr)"/>
<rect x="1443" y="61" width="18" height="18" fill="url(#st)"/><circle cx="1452" cy="70" r="8" fill="url(#mgn)"/>
<rect x="1443" y="81" width="18" height="18" fill="url(#st)"/><circle cx="1452" cy="90" r="8" fill="url(#mea)"/>
<use href="#pd" x="1468.7" y="45.5"/><use href="#pd" x="1468.7" y="65.5"/><use href="#pd" x="1508.7" y="85.5"/>
<use href="#ck" x="1485.5" y="63"/><use href="#ck" x="1465.5" y="83"/>
<path d="M1512.5 64L1519.5 76H1505.5Z" fill="#ea6432"/><path d="M1532.5 64L1539.5 76H1525.5Z" fill="#ea6432"/>
<path d="M1486 90L1499 87L1497 94L1488 95ZM1491 84V88M1495 85V88" fill="#b8752f" stroke="#b8752f"/>

<!-- strips -->
<path d="M1250 278V304M1252 278V304M1254 278V304" stroke="#7a7a7a" stroke-dasharray="1.5 1.5"/>
<rect class="g" x="1258.5" y="273.5" width="142" height="35" rx="4"/>
<path class="sep" d="M1293.5 274V308M1329.5 274V308M1365.5 274V308"/>
<circle cx="1270" cy="286" r="6.5" fill="#ddd"/><path d="M1285 284l-4 2v4l4 2 4-2v-4zM1266 298l-4 2v4l4 2 4-2v-4zM1284 298l-4 2v4l4 2 4-2v-4z" fill="#6d87c8" stroke="#2e3b5e"/>
<circle cx="1305" cy="284" r="7.5" fill="#7f9ad8"/><path d="M1321 290l-4 2v4l4 2 4-2v-4zM1314 298l-4 2v3l4 2 4-2v-3zM1322 296l-4 2v4l4 2 4-2v-4z" fill="#e6e6e6" stroke="#555"/>
<circle cx="1342" cy="286" r="7.5" fill="#ccc"/><path d="M1357 284l-4 2v4l4 2 4-2v-4zM1343 298l-4 2v4l4 2 4-2v-4zM1356 298l-4 2v4l4 2 4-2v-4z" fill="#6d87c8" stroke="#2e3b5e"/>
<path d="M1377 280Q1377 278 1381 278Q1386 278 1386 284Q1386 288 1383 292L1380 302Q1376 298 1376 292Z" fill="#f2f2f2" stroke="#222"/><circle cx="1378" cy="283" r="1" fill="#111"/><circle cx="1383" cy="283" r="1" fill="#111"/><path d="M1394 288l-5 2v5l5 2 5-2v-5zM1389 298l-5 2v4l5 2 5-2v-4zM1399 296l-4 2v4l4 2 4-2v-4z" fill="#6d87c8" stroke="#2e3b5e"/>
<path d="M1197 309.5H1681" stroke="#5a5a5a"/>
<path d="M1198 319V344M1200 319V344M1202 319V344" stroke="#7a7a7a" stroke-dasharray="1.5 1.5"/>
<rect class="g" x="1206" y="313" width="322" height="35" rx="4"/>
<path class="sep" d="M1240.5 314V348M1277.5 314V348M1313.5 314V348M1349.5 314V348M1385.5 314V348M1421.5 314V348M1457.5 314V348M1493.5 314V348"/>
<circle cx="1223" cy="331" r="13.5" fill="none" stroke="#e0562b" stroke-width="1.8"/><use href="#arw" x="1218" y="324"/>
<rect x="1244" y="317" width="16" height="15" fill="none" stroke="#e0562b" stroke-width="1.8"/><use href="#arw" x="1262" y="333"/>
<rect x="1280" y="317" width="16" height="15" fill="none" stroke="#e0562b" stroke-width="1.8"/><path d="M1296 322Q1300 317 1308 316M1289 332Q1285 336 1284 343" fill="none" stroke="#1e1e1e" stroke-width="2"/><use href="#arw" x="1298" y="333"/>
<path d="M1317 329L1327 318L1345 325L1333 333L1327 344Z" fill="none" stroke="#e0562b" stroke-width="1.8"/><use href="#arw" x="1334" y="333"/>
<use href="#cube" x="1367" y="331" opacity=".75"/>
<path d="M1391 319V342M1415 319V342M1399 319V342M1407 319V342M1397 331H1410" stroke="#787878" stroke-width="2"/>
<path d="M1431 325L1438 318L1445 325ZM1431 345L1438 336L1445 345Z" fill="#686868" stroke="#7d7d7d"/><path d="M1447 331V342" stroke="#7d7d7d" stroke-width="2"/>
<path d="M1463 342Q1470 325 1485 319" fill="none" stroke="#7d7d7d" stroke-width="1.5"/><circle cx="1463" cy="342" r="3" fill="#585858" stroke="#888"/><circle cx="1469" cy="327" r="3" fill="#585858" stroke="#888"/><circle cx="1485" cy="319" r="3" fill="#585858" stroke="#888"/>
<path d="M1500 342Q1505 325 1523 319" fill="none" stroke="#e0562b" stroke-width="1.5"/><circle cx="1500" cy="342" r="2.8" fill="#e0562b"/><circle cx="1506" cy="327" r="2.8" fill="#e0562b"/><circle cx="1523" cy="319" r="2.8" fill="#e0562b"/>

<!-- attribute manager -->
<path d="M1197 352.5H1681" stroke="#5e5e5e"/>
<rect x="1203" y="358" width="12" height="12" fill="#8a8a8a"/>
<text x="1224" y="368">Mode</text><text x="1268" y="368">Edit</text><text x="1302" y="368">User Data</text>
<path d="M1200 373.5H1681" stroke="#333"/>
<rect x="1200" y="377" width="481" height="20" fill="#4d4d4d"/><path d="M1200 397.5H1681" stroke="#5c5c5c"/>
<text x="1204" y="392" textLength="251">Null, Subdivision Surface, Sphere, world.1, world</text>
<rect x="1201" y="403" width="387" height="16" rx="3" fill="#6a6a6a" stroke="#2f2f2f"/>
<rect x="1201.5" y="403.5" width="96" height="15" rx="2" fill="#7f9fd1"/>
<path d="M1394.5 403V419M1491.5 403V419M1297.5 403V419" stroke="#3a3a3a"/>
<text x="1204.5" y="415" textLength="89" style="fill:#101010">Objects Selection</text><text x="1322" y="415" style="fill:#cdcdcd">Selection</text><text x="1419" y="415" style="fill:#cdcdcd">Structure</text><text x="1518" y="415" style="fill:#cdcdcd">Textures</text>
<rect x="1203" y="428" width="478" height="15" fill="#333"/>
<text x="1206" y="440">Object Selection</text>
<rect x="1204" y="448" width="12" height="12" rx="3" fill="#2d2d2d"/><path d="M1206 454L1208.5 459L1214 449" fill="none" stroke="#cfcfcf" stroke-width="1.8"/>
<text x="1220" y="458">Calculate Children</text>
<path d="M1204 465.5H1681" stroke="#5e5e5e"/>
<text x="1256" y="481">Project</text><text x="1341" y="481">Cache</text>
<rect class="f" x="1256.5" y="483.5" width="79" height="16"/><rect class="f" x="1340.5" y="483.5" width="79" height="16"/>
<rect class="f" x="1256.5" y="500.5" width="79" height="16"/><rect class="f" x="1340.5" y="500.5" width="79" height="16"/>
<rect class="f" x="1256.5" y="517.5" width="79" height="16"/><rect class="f" x="1340.5" y="517.5" width="79" height="16"/>
<rect class="f" x="1256.5" y="534.5" width="79" height="16"/>
<text x="1204" y="496">Object</text><text x="1204" y="513">Points</text><text x="1204" y="530">Polygons</text><text x="1204" y="547">Memory</text>
<text x="1260" y="496">5</text><text x="1344" y="496">5</text><text x="1260" y="513">209515</text><text x="1344" y="513">209515</text><text x="1260" y="530">224393</text><text x="1344" y="530">224393</text><text x="1260" y="547">17.43 MB</text>

<!-- blue highlight rectangles -->
<rect x="1248" y="4.5" width="352.5" height="170.5" rx="6" fill="none" stroke="#3377bd" stroke-width="5"/>
<rect x="1187.5" y="432.5" width="343" height="216" rx="6" fill="none" stroke="#3377bd" stroke-width="5"/>
</svg>
</body></html>
